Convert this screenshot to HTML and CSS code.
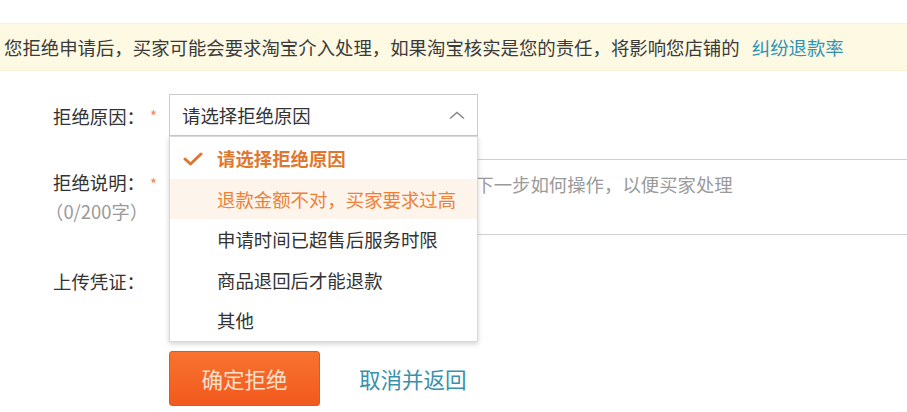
FILE: index.html
```html
<!DOCTYPE html>
<html lang="zh-CN">
<head>
<meta charset="utf-8">
<title>拒绝退款</title>
<link rel="stylesheet" href="styles.css">
</head>
<body>
<div class="page">
  <div class="notice">您拒绝申请后，买家可能会要求淘宝介入处理，如果淘宝核实是您的责任，将影响您店铺的 <a class="notice-link" href="#">纠纷退款率</a></div>

  <div class="form">
    <div class="row row-reason">
      <div class="label">拒绝原因：</div>
      <div class="star">*</div>
      <div class="field">
        <div class="select">
          <span class="select-text">请选择拒绝原因</span>
          <svg class="chevron" width="20" height="10" viewBox="0 0 20 10"><path d="M3 8.5 L10 2.5 L17 8.5" fill="none" stroke="#8a8a8a" stroke-width="1.6"/></svg>
          <ul class="options">
            <li class="option option-selected">
              <svg class="check" width="20" height="14" viewBox="0 0 20 14"><path d="M2 7 L7.5 12 L18 2" fill="none" stroke="#e0772f" stroke-width="3" stroke-linecap="round" stroke-linejoin="round"/></svg>
              请选择拒绝原因
            </li>
            <li class="option option-hover">退款金额不对，买家要求过高</li>
            <li class="option">申请时间已超售后服务时限</li>
            <li class="option">商品退回后才能退款</li>
            <li class="option">其他</li>
          </ul>
        </div>
      </div>
    </div>

    <div class="row row-desc">
      <div class="label">
        <div>拒绝说明：</div>
        <div class="count">（0/200字）</div>
      </div>
      <div class="star">*</div>
      <div class="field">
        <textarea class="textarea" placeholder="请详细填写拒绝的原因，并告知买家下一步如何操作，以便买家处理"></textarea>
      </div>
    </div>

    <div class="row row-upload">
      <div class="label">上传凭证：</div>
      <div class="star"></div>
      <div class="field">
        <div class="upload"></div>
      </div>
    </div>

    <div class="row row-actions">
      <div class="label"></div>
      <div class="star"></div>
      <div class="field actions">
        <button class="btn-primary" type="button">确定拒绝</button>
        <a class="cancel" href="#">取消并返回</a>
      </div>
    </div>
  </div>
</div>
</body>
</html>
```

FILE: styles.css
```css
html, body {
  margin: 0;
  padding: 0;
  background: #ffffff;
}

body {
  font-family: "Noto Sans CJK SC", "Microsoft YaHei", sans-serif;
  font-size: 18.4px;
  color: #333333;
  overflow: hidden;
}

.page {
  padding-top: 23px;
}

.notice {
  height: 46px;
  line-height: 46px;
  background: #fdf9e3;
  border-top: 1px solid #f8f2d8;
  border-bottom: 1px solid #f8f2d8;
  padding-left: 4px;
  white-space: nowrap;
  color: #3a3a3a;
}

.notice-link {
  color: #2f93b4;
  text-decoration: none;
  margin-left: 8px;
}

.form {
  padding-top: 23px;
  padding-left: 53px;
}

.row {
  display: grid;
  grid-template-columns: 92px 24px 1fr;
}

.label {
  color: #333333;
  white-space: nowrap;
}

.star {
  color: #f0865a;
  font-size: 15px;
  padding-left: 5px;
}

/* reason row */
.row-reason {
  height: 42px;
}

.row-reason .label {
  line-height: 44px;
}

.row-reason .star {
  line-height: 44px;
}

.select {
  position: relative;
  box-sizing: border-box;
  width: 309px;
  height: 42px;
  border: 1px solid #cccccc;
  background: #ffffff;
  display: flex;
  align-items: center;
  padding-left: 12px;
}

.select-text {
  flex: 1;
  color: #333333;
}

.chevron {
  margin-right: 10px;
}

.options {
  position: absolute;
  left: -1px;
  top: 41px;
  width: 309px;
  box-sizing: border-box;
  margin: 0;
  padding: 1px 0 0;
  list-style: none;
  background: #ffffff;
  border: 1px solid #d8d8d8;
  box-shadow: 0 2px 5px rgba(0, 0, 0, 0.18);
  z-index: 10;
}

.option {
  height: 40.5px;
  line-height: 40.5px;
  padding-left: 47px;
  color: #333333;
  position: relative;
  white-space: nowrap;
}

.option-selected {
  color: #e0772f;
  font-weight: bold;
}

.check {
  position: absolute;
  left: 13px;
  top: 14px;
}

.option-hover {
  background: #fdf4eb;
  color: #ef8035;
}

/* description row */
.row-desc {
  margin-top: 23px;
}

.row-desc .label {
  padding-top: 10px;
  line-height: 26px;
}

.row-desc .star {
  padding-top: 10px;
  line-height: 30px;
}

.count {
  color: #9a9a9a;
  margin-left: -8px;
  margin-top: 3px;
}

.textarea {
  display: block;
  box-sizing: border-box;
  width: 760px;
  height: 76px;
  border: 1px solid #cfcfcf;
  padding: 11px 11px;
  font-family: inherit;
  font-size: 18.4px;
  line-height: 26px;
  color: #333333;
  resize: none;
  outline: none;
}

.textarea::placeholder {
  color: #9a9a9a;
}

/* upload row */
.row-upload {
  margin-top: 24px;
}

.row-upload .label {
  line-height: 44px;
}

.upload {
  height: 66px;
}

/* actions */
.row-actions {
  margin-top: 26px;
}

.actions {
  display: flex;
  align-items: center;
}

.btn-primary {
  box-sizing: border-box;
  width: 151px;
  height: 55px;
  border: 1px solid #e5561d;
  border-radius: 3px;
  background: linear-gradient(#f8732f, #f2591e);
  color: #fde0cb;
  font-family: inherit;
  font-size: 21.5px;
  padding: 0;
  cursor: pointer;
}

.cancel {
  margin-left: 39px;
  font-size: 21.5px;
  color: #3b91ab;
  text-decoration: none;
}
```
